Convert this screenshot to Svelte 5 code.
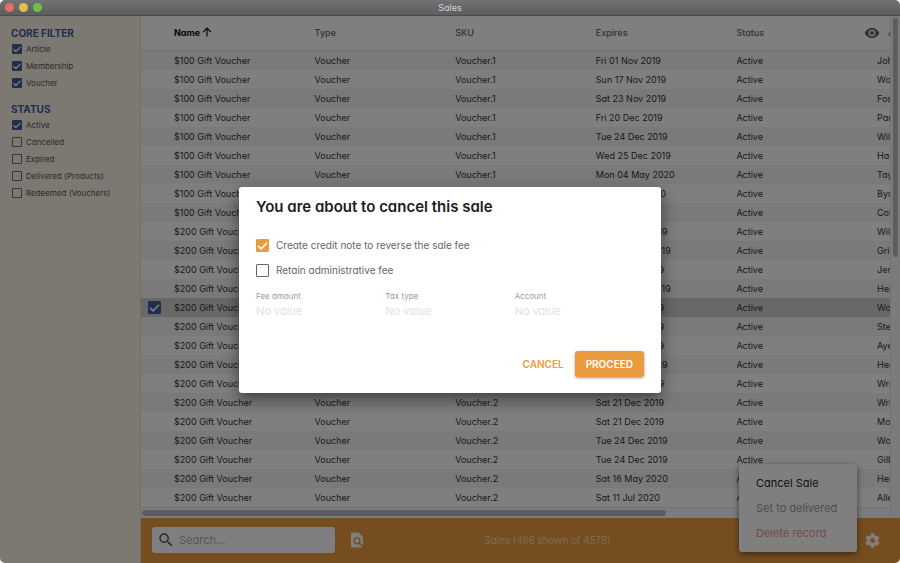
<script>
  const filters = [
    {
      title: 'CORE FILTER',
      items: [
        { label: 'Article', checked: true },
        { label: 'Membership', checked: true },
        { label: 'Voucher', checked: true }
      ]
    },
    {
      title: 'STATUS',
      items: [
        { label: 'Active', checked: true },
        { label: 'Cancelled', checked: false },
        { label: 'Expired', checked: false },
        { label: 'Delivered (Products)', checked: false },
        { label: 'Redeemed (Vouchers)', checked: false }
      ]
    }
  ];

  const records = [
    ['Fri 01 Nov 2019', 'John'],
    ['Sun 17 Nov 2019', 'Woods'],
    ['Sat 23 Nov 2019', 'Foster'],
    ['Fri 20 Dec 2019', 'Park'],
    ['Tue 24 Dec 2019', 'Wilson'],
    ['Wed 25 Dec 2019', 'Harris'],
    ['Mon 04 May 2020', 'Taylor'],
    ['Thu 02 Jul 2020', 'Byrne'],
    ['Fri 10 Jul 2020', 'Cole'],
    ['Tue 24 Dec 2019', 'Wilson'],
    ['Wed 25 Dec 2019', 'Griffin'],
    ['Sat 21 Dec 2019', 'Jensen'],
    ['Wed 25 Dec 2019', 'Henry'],
    ['Sat 21 Dec 2019', 'Woods'],
    ['Sat 21 Dec 2019', 'Stevens'],
    ['Sat 21 Dec 2019', 'Ayers'],
    ['Tue 24 Dec 2019', 'Henry'],
    ['Sat 21 Dec 2019', 'Wright'],
    ['Sat 21 Dec 2019', 'Wright'],
    ['Sat 21 Dec 2019', 'Moore'],
    ['Tue 24 Dec 2019', 'Woods'],
    ['Tue 24 Dec 2019', 'Gilbert'],
    ['Sat 16 May 2020', 'Henry'],
    ['Sat 11 Jul 2020', 'Allen']
  ];
  const rows = records.map(([expires, customer], i) => ({
    name: i < 9 ? '$100 Gift Voucher' : '$200 Gift Voucher',
    sku: i < 9 ? 'Voucher.1' : 'Voucher.2',
    expires,
    customer,
    selected: i === 13
  }));

  const fields = ['Fee amount', 'Tax type', 'Account'];
</script>

<div class="window">
  <header class="titlebar">
    <div class="lights"><i class="red"></i><i class="yellow"></i><i class="green"></i></div>
    <span>Sales</span>
  </header>

  <div class="body">
    <aside>
      {#each filters as group}
        <section>
          <h2>{group.title}</h2>
          {#each group.items as item}
            <label><input type="checkbox" checked={item.checked} />{item.label}</label>
          {/each}
        </section>
      {/each}
    </aside>

    <main>
      <div class="list">
        <div class="scroller">
          <table>
            <colgroup>
              <col class="pick" /><col /><col /><col /><col /><col /><col class="last" />
            </colgroup>
            <thead>
              <tr>
                <th></th>
                <th class="sorted">Name
                  <svg width="10" height="10" viewBox="0 0 10 10" fill="none" stroke="currentColor" stroke-width="1.2"><path d="M5 9.5V1.2M1.2 5 5 1.2 8.8 5" /></svg>
                </th>
                <th>Type</th>
                <th>SKU</th>
                <th>Expires</th>
                <th>Status</th>
                <th class="next">
                  <svg class="eye" width="16" height="16" viewBox="0 0 24 24" fill="currentColor"><path d="M12 4.500C7 4.500 2.730 7.610 1 12c1.730 4.390 6 7.500 11 7.500s9.270-3.110 11-7.500c-1.730-4.390-6-7.500-11-7.500zM12 17a5 5 0 1 1 0-10 5 5 0 0 1 0 10zm0-8a3 3 0 1 0 0 6 3 3 0 0 0 0-6z" /></svg>
                  Attendee
                </th>
              </tr>
            </thead>
            <tbody>
              {#each rows as row}
                <tr class:selected={row.selected}>
                  <td class="tick">{#if row.selected}<input type="checkbox" checked aria-label="Select row" />{/if}</td>
                  <td>{row.name}</td>
                  <td>Voucher</td>
                  <td>{row.sku}</td>
                  <td>{row.expires}</td>
                  <td>Active</td>
                  <td>{row.customer}</td>
                </tr>
              {/each}
            </tbody>
          </table>
          <div class="hbar"><div></div></div>
        </div>
        <div class="vbar"><div></div></div>
      </div>

      <footer>
        <label class="search">
          <svg width="18" height="18" viewBox="0 0 24 24" fill="#555"><path d="M15.500 14h-.79l-.28-.27A6.470 6.470 0 0 0 16 9.500 6.500 6.500 0 1 0 9.500 16c1.610 0 3.090-.59 4.230-1.570l.27.28v.79l5 4.990L20.490 19l-4.990-5zm-6 0C7.010 14 5 11.990 5 9.500S7.010 5 9.500 5 14 7.010 14 9.500 11.990 14 9.500 14z" /></svg>
          <input type="text" placeholder="Search..." aria-label="Search" />
        </label>
        <button class="icon" aria-label="Advanced search">
          <svg width="18" height="18" viewBox="0 0 24 24" fill="#fff"><path d="M20 19.590V8l-6-6H6c-1.100 0-1.990.9-1.990 2L4 20c0 1.100.89 2 1.990 2H18c.45 0 .85-.15 1.190-.4l-4.430-4.430c-.8.52-1.740.83-2.760.83-2.760 0-5-2.240-5-5s2.240-5 5-5 5 2.240 5 5c0 1.020-.31 1.960-.83 2.750L20 19.590zM9 13c0 1.660 1.340 3 3 3s3-1.340 3-3-1.340-3-3-3-3 1.340-3 3z" /></svg>
        </button>
        <p>Sales (486 shown of 4578)</p>
        <button class="icon" aria-label="Settings">
          <svg width="17" height="17" viewBox="0 0 24 24" fill="#fff"><path d="M19.430 12.980c.04-.32.07-.64.07-.98s-.03-.66-.07-.98l2.110-1.650c.19-.15.24-.42.12-.64l-2-3.460c-.12-.22-.39-.3-.61-.22l-2.490 1c-.52-.4-1.080-.73-1.690-.98l-.38-2.650A.49.49 0 0 0 14 2h-4c-.25 0-.46.18-.49.42l-.38 2.650c-.61.25-1.170.59-1.690.98l-2.490-1c-.23-.09-.49 0-.61.22l-2 3.460c-.13.22-.07.49.12.64l2.110 1.650c-.04.32-.07.65-.07.98s.03.66.07.98l-2.110 1.650c-.19.15-.24.42-.12.64l2 3.460c.12.22.39.3.61.22l2.490-1c.52.4 1.080.73 1.690.98l.38 2.650c.03.24.24.42.49.42h4c.25 0 .46-.18.49-.42l.38-2.650c.61-.25 1.170-.59 1.690-.98l2.490 1c.23.09.49 0 .61-.22l2-3.460c.12-.22.07-.49-.12-.64l-2.110-1.650zM12 15.500a3.500 3.500 0 1 1 0-7 3.500 3.500 0 0 1 0 7z" /></svg>
        </button>
        <div class="menu">
          <button>Cancel Sale</button>
          <button class="muted">Set to delivered</button>
          <button class="danger">Delete record</button>
        </div>
      </footer>
    </main>

    <div class="overlay">
      <div class="dialog" role="dialog" aria-labelledby="dialog-title">
        <h1 id="dialog-title">You are about to cancel this sale</h1>
        <label><input type="checkbox" checked />Create credit note to reverse the sale fee</label>
        <label><input type="checkbox" />Retain administrative fee</label>
        <div class="fields">
          {#each fields as field, i}
            <div>
              <label for="field-{i}">{field}</label>
              <input id="field-{i}" type="text" placeholder="No value" disabled />
            </div>
          {/each}
        </div>
        <div class="actions">
          <button>CANCEL</button>
          <button class="primary">PROCEED</button>
        </div>
      </div>
    </div>
  </div>
</div>

<style>
  :global(body) { background: #fff; }
  * { box-sizing: border-box; }
  .window {
    display: flex;
    flex-direction: column;
    height: 100vh;
    border-radius: 5px;
    overflow: hidden;
    font: 10px/16px Inter, "Open Sans", sans-serif;
    font-feature-settings: "cv11";
    color: #333;
  }
  button, input { font: inherit; font-feature-settings: inherit; color: inherit; }
  button { border: 0; padding: 0; background: none; }
  svg { display: block; flex: none; }

  .titlebar {
    position: relative;
    flex: none;
    height: 16px;
    background: linear-gradient(#707274, #5c5d5f);
    border-bottom: 1px solid #494a4c;
    color: #d5d5d5;
    font-size: 9px;
    text-align: center;
  }
  .lights { position: absolute; left: 5px; top: 3px; display: flex; gap: 5px; }
  .lights i { width: 9px; height: 9px; border-radius: 50%; }
  .red { background: #ee6a5f; }
  .yellow { background: #e1c04c; }
  .green { background: #6cc04a; }

  .body { position: relative; flex: 1; min-height: 0; display: flex; }

  input[type='checkbox'] {
    appearance: none;
    flex: none;
    width: 10px;
    height: 10px;
    margin: 0;
    border: 1px solid #6c6a66;
    border-radius: 1px;
  }
  input[type='checkbox']:checked {
    border-color: #405a9c;
    background: #405a9c url("data:image/svg+xml,%3Csvg xmlns='http://www.w3.org/2000/svg' viewBox='0 0 10 10'%3E%3Cpath d='M1.500 5.200 3.900 7.500 8.500 2.900' fill='none' stroke='%23fff' stroke-width='1.300'/%3E%3C/svg%3E") center / 100% no-repeat;
    background-origin: border-box;
  }

  aside {
    flex: none;
    width: 141px;
    padding: 10px 11px;
    background: #f8f3e7;
    border-right: 1px solid #dedad0;
  }
  aside section { margin-bottom: 11px; }
  aside h2 { margin: 0; font-size: 10px; line-height: 14px; font-weight: 700; color: #405a9c; }
  aside label { display: flex; align-items: center; gap: 4px; height: 17px; padding-left: 1px; font-size: 8px; color: #555; white-space: nowrap; }

  main { flex: 1; min-width: 0; display: flex; flex-direction: column; }
  .list { flex: 1; min-height: 0; display: flex; background: #fff; }
  .scroller { flex: 1; min-width: 0; display: flex; flex-direction: column; overflow: hidden; }
  table { width: 100%; table-layout: fixed; border-collapse: separate; border-spacing: 0; }
  .pick { width: 33px; }
  .last { width: 13px; }
  th, td { padding: 0; text-align: left; white-space: nowrap; }
  th { height: 35px; border-bottom: 1px solid #e6e6e6; font-size: 9px; font-weight: 500; color: #666; }
  th.sorted { font-weight: 700; color: #111; }
  th.sorted svg { display: inline-block; vertical-align: -1px; }
  th.next { position: relative; padding-left: 11px; }
  .eye { position: absolute; left: -13px; top: 9px; }
  td { height: 19px; font-size: 9px; }
  tbody tr:nth-child(odd) { background: #f4f4f4; }
  tbody tr.selected { background: #d0d0d0; }
  .tick { padding-left: 7px; }
  .tick input[type='checkbox'] { display: block; width: 13px; height: 13px; }

  .hbar { flex: 1; padding: 2px 0 0 1px; background: #f8f8f8; border-top: 1px solid #e6e6e6; }
  .hbar div { width: 70%; height: 6px; border-radius: 3px; background: #bbb; }
  .vbar { flex: none; width: 10px; padding: 2px; background: #f6f6f6; border-left: 1px solid #e6e6e6; }
  .vbar div { height: 48%; border-radius: 3px; background: #bbb; }

  footer {
    position: relative;
    flex: none;
    display: flex;
    align-items: center;
    gap: 13px;
    height: 45px;
    padding: 0 19px 1px 11px;
    background: #ec9a3e;
    color: #fff;
  }
  footer p { flex: 1; margin: 0; text-align: center; font-weight: 300; color: #fbe3c8; padding-right: 135px; }
  .search { display: flex; align-items: center; gap: 4px; width: 183px; height: 26px; padding: 0 5px; border-radius: 3px; background: #fff; }
  .search input { flex: 1; min-width: 0; border: 0; padding: 0; outline: 0; background: none; font-size: 11px; }
  .search input::placeholder { color: #aaa; opacity: 1; }
  .menu {
    position: absolute;
    right: 43px;
    bottom: 11px;
    width: 118px;
    padding: 6px 17px 7px;
    border-radius: 3px;
    background: #fff;
    box-shadow: 0 2px 6px rgba(0, 0, 0, .5);
  }
  .menu button { display: block; height: 25px; font-size: 11px; white-space: nowrap; color: #222; }
  .menu .muted { color: #999; }
  .menu .danger { color: #e89890; }

  .overlay {
    position: absolute;
    inset: 0;
    display: flex;
    align-items: center;
    justify-content: center;
    background: rgba(0, 0, 0, .5);
  }
  .dialog {
    width: 422px;
    max-width: 90%;
    padding: 10px 17px 16px;
    border-radius: 3px;
    background: #fff;
    box-shadow: 0 5px 16px rgba(0, 0, 0, .5);
  }
  h1 { margin: 0 0 16px; font-size: 15px; line-height: 20px; font-weight: 600; color: #1c1c1c; }
  .dialog > label { display: flex; align-items: center; gap: 7px; height: 25px; font-size: 10px; color: #666; }
  .dialog input[type='checkbox'] { width: 13px; height: 13px; border-color: #666; }
  .dialog input[type='checkbox']:checked { border-color: #ec9a3e; background-color: #ec9a3e; }
  .fields { display: flex; margin-top: 6px; }
  .fields div { flex: 1; min-width: 0; }
  .fields label { display: block; font-size: 8px; line-height: 14px; color: #999; }
  .fields input { display: block; width: 100%; height: 16px; padding: 0; border: 0; background: none; font-size: 11px; }
  .fields input::placeholder { color: #e2e2e2; opacity: 1; }
  .actions { display: flex; justify-content: flex-end; gap: 11px; margin-top: 32px; }
  .actions button { height: 26px; font-weight: 600; color: #ec9a3e; }
  .actions .primary { padding: 0 11px; border-radius: 3px; background: #ec9a3e; color: #fff; box-shadow: 0 1px 3px rgba(0, 0, 0, .4); }
</style>
